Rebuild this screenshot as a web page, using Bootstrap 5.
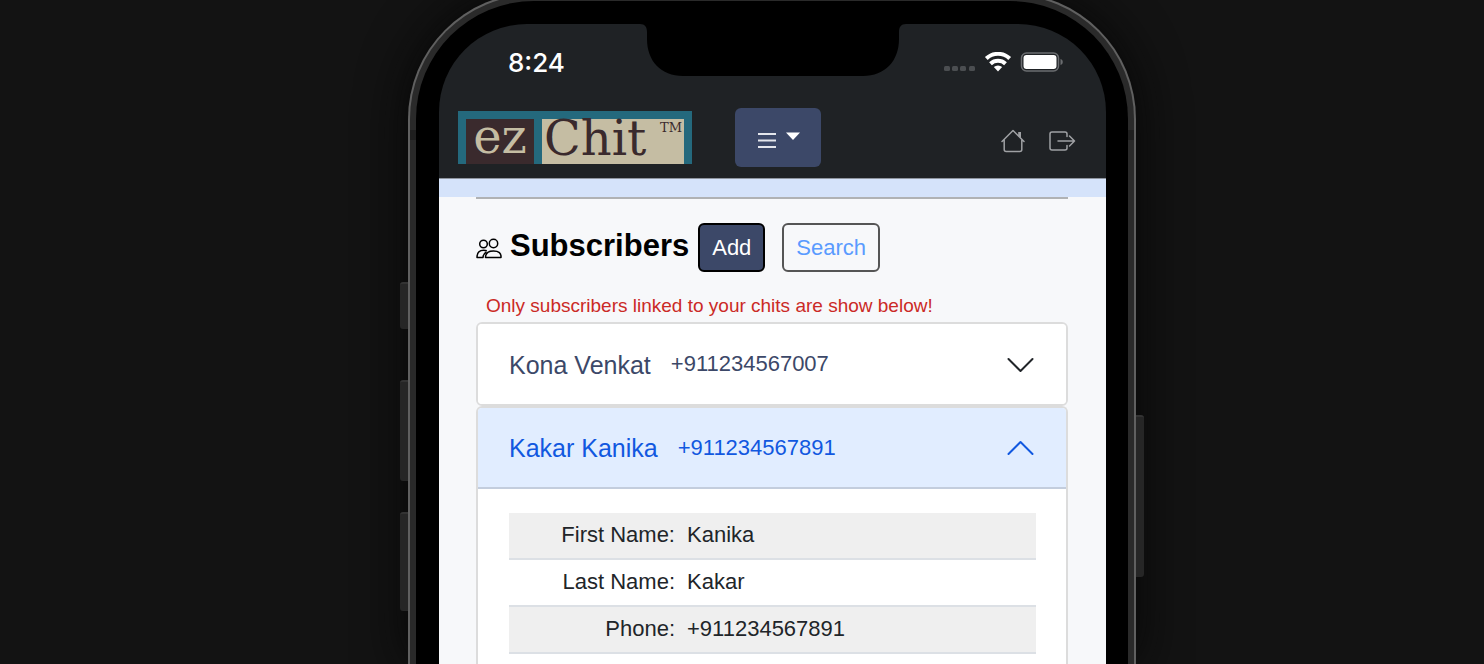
<!DOCTYPE html>
<html lang="en">
<head>
<meta charset="utf-8">
<meta name="viewport" content="width=device-width, initial-scale=1">
<title>ezChit - Subscribers</title>
<link href="https://cdn.jsdelivr.net/npm/bootstrap@5.3.0/dist/css/bootstrap.min.css" rel="stylesheet">
<style>
  body { background: #131313; font-family: "Liberation Sans", Arial, sans-serif; font-size: 22px; line-height: 32px; }
  .stage { padding-left: 60px; }
  /* device shell */
  .phone { width: 100%; max-width: 728px; margin-top: -7px; border: 2px solid #606060; border-bottom: 0; border-radius: 126px 126px 0 0; background: #2a2a2a; padding: 6px 6px 0; box-shadow: 0 0 50px #060606; }
  .bezel { background: #000; border-radius: 118px 118px 0 0; padding: 23px 22px 0 23px; }
  .screen { background: linear-gradient(#000 100px, #f7f8fa 100px); border-radius: 88px 88px 0 0; }
  .notch { top: 0; left: 50%; transform: translateX(-50%); }
  .side-key { width: 8px; background: #262626; border-top: 2px solid #333; right: 100%; margin-right: 2px; border-radius: 3px 0 0 3px; }
  .key-mute { top: 287px; height: 47px; }
  .key-up { top: 385px; height: 101px; }
  .key-down { top: 517px; height: 99px; }
  .key-power { top: 420px; height: 162px; right: auto; left: 100%; margin: 0 0 0 2px; border-radius: 0 3px 3px 0; }
  .antenna { top: 135px; width: 6px; height: 10px; background: #1f1f1f; }
  /* status bar and header */
  .app-top { background: #1f2225; border-bottom: 1px solid #8f959f; border-radius: 88px 88px 0 0; }
  .status { height: 84px; padding: 0 42px 8px 69px; }
  .clock { font: 500 26px Inter, sans-serif; }
  .app-bar { padding: 0 30px 11px 19px; height: 70px; }
  .brand { background: #24697d; color: #3a2a2d; font: 48px/38px "DejaVu Serif", serif; padding: 8px 8px 0; gap: 8px; height: 53px; margin-bottom: 1px; }
  .brand-ez { background: #3a2a2d; color: #c5bda3; width: 68px; line-height: 34px; }
  .brand-chit { background: #c5bda3; width: 142px; padding: 0 2px; }
  .brand-tm { font-size: 13px; line-height: 18px; }
  .btn-menu { width: 86px; height: 59px; margin-left: 43px; padding: 3px 0 0 2px; background: #3c4868; border-radius: 6px; }
  .btn-menu:hover { background: #465379; }
  .nav-icon { padding-top: 7px; }
  .band { height: 18px; background: #d5e3fa; }
  /* content */
  .content { padding: 0 38px 0 37px; }
  .rule { border-top: 2px solid #b0b2b4; }
  .page-title { font-size: 31px; font-weight: 700; color: #000; line-height: 40px; padding-bottom: 4px; }
  .btn-tool { font-size: 22px; line-height: 31px; padding: 7px 12px; height: 49px; border: 2px solid #000; border-radius: 6px; }
  .btn-add, .btn-add:hover { background: #3c4868; color: #fff; margin-left: 9px; }
  .btn-search { border-color: #555; color: #5a9bff; margin-left: 17px; }
  .note { color: #cb2a26; font-size: 19px; line-height: 24px; padding: 22px 0 4px 10px; }
  .accordion-item { border: 2px solid #dcdcdc !important; border-radius: 6px !important; background: #fff; }
  .accordion-item + .accordion-item { border-bottom: 0 !important; border-radius: 6px 6px 0 0 !important; }
  .accordion-button { font-size: 22px; color: #3c4868; padding: 1px 32px 0 31px; height: 80px; border-radius: 4px !important; }
  .accordion-button:not(.collapsed) { background: #e1edff; color: #1158e0; box-shadow: none; height: 81px; padding-top: 1px; border-bottom: 2px solid #c3cddd; border-radius: 4px 4px 0 0 !important; }
  .accordion-button::after { display: none; }
  .person { font-size: 25px; margin-right: 20px; }
  .accordion-body { padding: 24px 30px 24px 31px; }
  .detail { color: #212529; }
  .detail th, .detail td { padding: 6px 6px 7px; border-bottom: 2px solid #dce0e5; line-height: 32px; font-weight: 400; }
  .detail th { width: 172px; text-align: right; }
  .detail tr:nth-child(odd) { background: #efefef; }
</style>
</head>
<body class="overflow-hidden">
<div class="stage vh-100 d-flex justify-content-center">
  <div class="phone position-relative d-flex flex-column">
    <span class="side-key key-mute position-absolute"></span>
    <span class="side-key key-up position-absolute"></span>
    <span class="side-key key-down position-absolute"></span>
    <span class="side-key key-power position-absolute"></span>
    <span class="antenna position-absolute start-0"></span>
    <span class="antenna position-absolute end-0"></span>
    <div class="bezel flex-grow-1 d-flex">
      <div class="screen position-relative flex-grow-1">
        <svg class="notch position-absolute" width="266" height="53" viewBox="0 0 266 53" aria-hidden="true"><path d="M0 0h266c-5 0-7 3-7 8v7c0 22-14 37-36 37H43C21 52 7 37 7 15V8c0-5-2-8-7-8z"/></svg>

        <header class="app-top">
          <div class="status d-flex align-items-center justify-content-between">
            <span class="clock text-white">8:24</span>
            <span class="d-flex align-items-center">
              <svg width="32" height="22" viewBox="0 0 32 22" fill="#4b4e51" aria-hidden="true"><rect x="0" y="15" width="6" height="5" rx="1.500"/><rect x="8" y="15" width="6" height="5" rx="1.500"/><rect x="16" y="15" width="6" height="5" rx="1.500"/><rect x="25" y="15" width="6" height="5" rx="1.500"/></svg>
              <svg class="ms-2" width="28" height="20" viewBox="0 0 28 20" aria-label="Wi-Fi"><g fill="none" stroke="#fff" stroke-width="4"><path d="M2.300 6.500a17 17 0 0 1 23.400 0M6.500 11.700a11 11 0 0 1 15 0"/></g><path d="M14 19.500l-4.200-4.400a6.200 6.200 0 0 1 8.400 0z" fill="#fff"/></svg>
              <svg class="ms-2" width="44" height="20" viewBox="0 0 44 20" aria-label="Battery full"><rect x="1.500" y="1" width="37" height="18" rx="5" fill="none" stroke="#6b6d70" stroke-width="1.500"/><rect x="3.500" y="3" width="33" height="14" rx="3" fill="#fff"/><path d="M40.500 7c3 .5 3 5.500 0 6z" fill="#6b6d70"/></svg>
            </span>
          </div>
          <nav class="app-bar d-flex align-items-center">
            <a href="#" class="brand d-flex text-decoration-none"><span class="brand-ez text-center">ez</span><span class="brand-chit d-flex justify-content-between">Chit<span class="brand-tm">TM</span></span></a>
            <button class="btn btn-menu d-flex align-items-center justify-content-center" type="button" aria-label="Menu">
              <svg width="44" height="18" viewBox="0 0 44 18" aria-hidden="true"><path d="M1 4h18M1 10.500h18M1 17h18" stroke="#e4e6ec" stroke-width="1.800"/><path d="M29 2.500h14l-7 7.500z" fill="#fff"/></svg>
            </button>
            <a href="#" class="nav-icon ms-auto d-flex" aria-label="Home"><svg width="24" height="24" viewBox="0 0 24 24" fill="none" stroke="#9fa1a4" stroke-width="1.500" stroke-linejoin="round" stroke-linecap="round"><path d="M1 12.500L12 1.500l11 11M3.200 10.500v10q0 2 2 2h13.600q2 0 2-2v-10"/><path d="M17.200 3h2.800v6.500l-2.800-2.700z" fill="#9fa1a4" stroke="none"/></svg></a>
            <a href="#" class="nav-icon ms-4 d-flex" aria-label="Log out"><svg width="27" height="22" viewBox="0 0 27 22" fill="none" stroke="#9fa1a4" stroke-width="1.500" stroke-linejoin="round" stroke-linecap="round"><path d="M18 6.500V4q0-2-2-2H3Q1 2 1 4v14q0 2 2 2h13q2 0 2-2v-2.500M9 11h16.500M20.500 6l5 5-5 5"/></svg></a>
          </nav>
        </header>

        <div class="band"></div>
        <main class="content">
          <div class="rule mb-4"></div>
          <div class="d-flex align-items-center">
            <svg width="26" height="24" viewBox="0 0 26 24" fill="none" stroke="#000" stroke-width="1.500" stroke-linejoin="round" aria-hidden="true"><circle cx="7.500" cy="8" r="3.800"/><circle cx="17.500" cy="7.500" r="4.200"/><path d="M9.500 21.500q0-6.500 8-6.500t7.500 6.500z"/><path d="M10.800 14.700Q9.500 14.200 7.500 14.200q-6.500 0-6.500 7.300h6q0-3.500 3.500-5.500"/></svg>
            <h1 class="page-title mb-0 ms-2">Subscribers</h1>
            <button class="btn btn-tool btn-add" type="button">Add</button>
            <button class="btn btn-tool btn-search" type="button">Search</button>
          </div>
          <p class="note mb-0">Only subscribers linked to your chits are show below!</p>

          <div class="accordion" id="people">
            <div class="accordion-item">
              <h2 class="accordion-header">
                <button class="accordion-button collapsed" type="button" data-bs-toggle="collapse" data-bs-target="#p1" aria-expanded="false" aria-controls="p1">
                  <span class="person">Kona Venkat</span>+911234567007
                  <svg class="ms-auto" width="27" height="16" viewBox="0 0 27 16" fill="none" stroke="#212529" stroke-width="2" stroke-linecap="round" stroke-linejoin="round" aria-hidden="true"><path d="M1.500 2l12 12 12-12"/></svg>
                </button>
              </h2>
              <div id="p1" class="accordion-collapse collapse" data-bs-parent="#people"></div>
            </div>
            <div class="accordion-item">
              <h2 class="accordion-header">
                <button class="accordion-button" type="button" data-bs-toggle="collapse" data-bs-target="#p2" aria-expanded="true" aria-controls="p2">
                  <span class="person">Kakar Kanika</span>+911234567891
                  <svg class="ms-auto" width="27" height="16" viewBox="0 0 27 16" fill="none" stroke="#1158e0" stroke-width="2" stroke-linecap="round" stroke-linejoin="round" aria-hidden="true"><path d="M1.500 14l12-12 12 12"/></svg>
                </button>
              </h2>
              <div id="p2" class="accordion-collapse collapse show" data-bs-parent="#people">
                <div class="accordion-body">
                  <table class="detail w-100">
                    <tbody>
                      <tr><th scope="row">First Name:</th><td>Kanika</td></tr>
                      <tr><th scope="row">Last Name:</th><td>Kakar</td></tr>
                      <tr><th scope="row">Phone:</th><td>+911234567891</td></tr>
                    </tbody>
                  </table>
                </div>
              </div>
            </div>
          </div>
        </main>
      </div>
    </div>
  </div>
</div>
<script src="https://cdn.jsdelivr.net/npm/bootstrap@5.3.0/dist/js/bootstrap.bundle.min.js"></script>
</body>
</html>
